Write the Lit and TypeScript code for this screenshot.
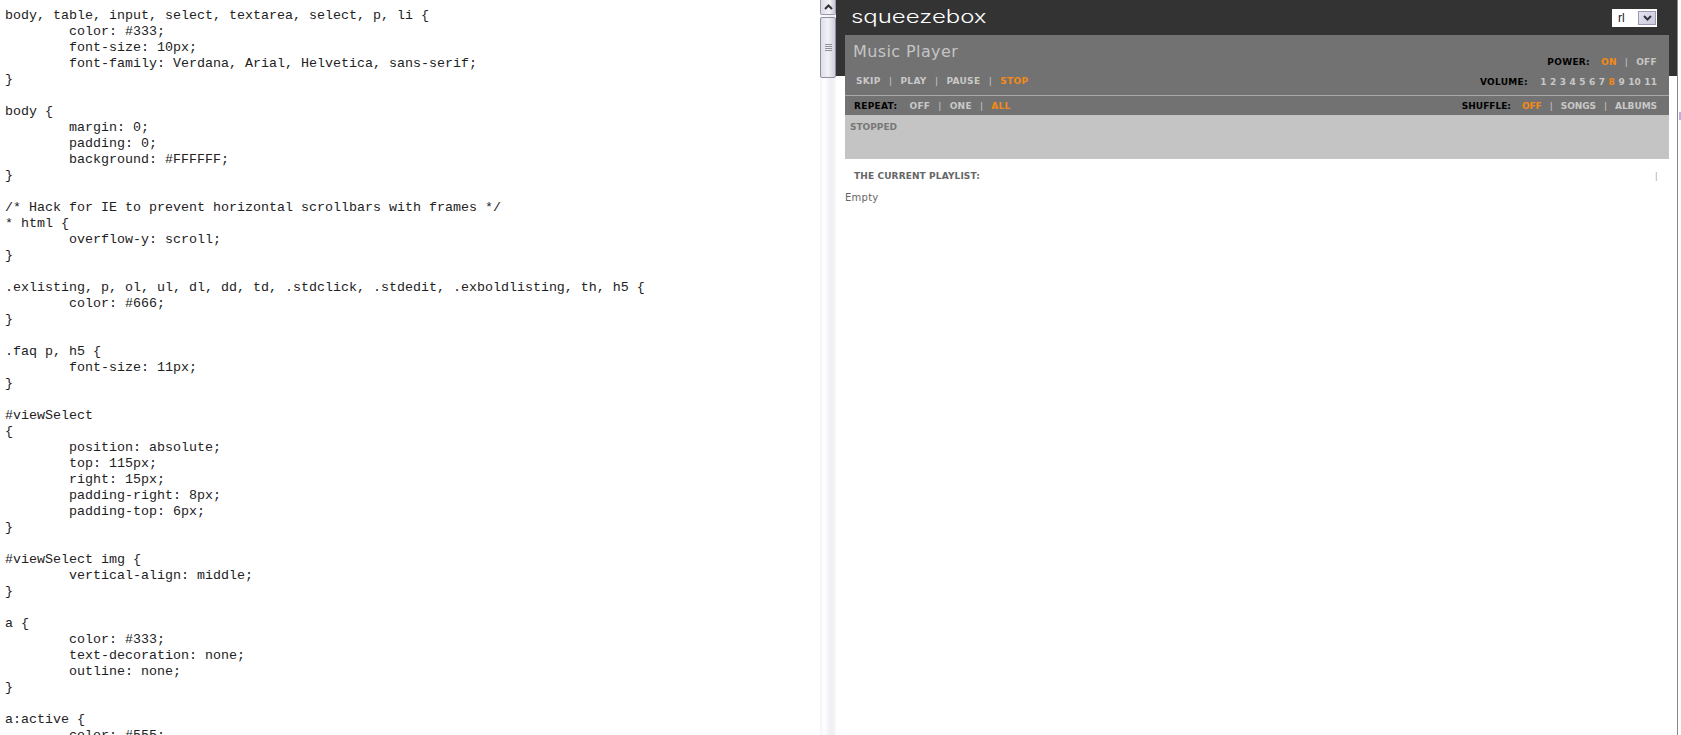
import { LitElement, html, css } from "lit";
import { customElement } from "lit/decorators.js";

const CODE = `body, table, input, select, textarea, select, p, li {
	color: #333;
	font-size: 10px;
	font-family: Verdana, Arial, Helvetica, sans-serif;
}

body {
	margin: 0;
	padding: 0;
	background: #FFFFFF;
}

/* Hack for IE to prevent horizontal scrollbars with frames */
* html {
	overflow-y: scroll;
}

.exlisting, p, ol, ul, dl, dd, td, .stdclick, .stdedit, .exboldlisting, th, h5 {
	color: #666;
}

.faq p, h5 {
	font-size: 11px;
}

#viewSelect
{
	position: absolute;
	top: 115px;
	right: 15px;
	padding-right: 8px;
	padding-top: 6px;
}

#viewSelect img {
	vertical-align: middle;
}

a {
	color: #333;
	text-decoration: none;
	outline: none;
}

a:active {
	color: #555;
}`;

@customElement("app-root")
export class AppRoot extends LitElement {
  static styles = css`
    :host { display: flex; width: 1681px; height: 735px; overflow: hidden; background: #fff; font-family: "DejaVu Sans", Verdana, sans-serif; }
    .code { width: 820px; flex: none; margin: 0; padding: 8px 0 0 5px; box-sizing: border-box; font: 13.33px/16px "Liberation Mono", monospace; color: #222; white-space: pre; tab-size: 8; overflow: hidden; }
    .scroll { width: 16px; flex: none; box-sizing: border-box; background: linear-gradient(90deg, #f3f3f7, #ffffff 25%, #eeeef3 70%, #f8f8fa); display: flex; flex-direction: column; gap: 2px; }
    .up { height: 15px; box-sizing: border-box; background: linear-gradient(90deg, #dcdce6, #f2f2f7 60%, #c9c9d6); border: 1px solid #9a9aa8; border-top: none; border-radius: 0 0 2px 2px; display: flex; align-items: center; justify-content: center; }
    .thumb { height: 61px; box-sizing: border-box; background: linear-gradient(90deg, #dedee8, #f1f1f6 50%, #cfcfdc); border: 1px solid #8f8f9e; border-radius: 2px; display: flex; align-items: center; justify-content: center; }
    .frame { flex: 1; display: flex; flex-direction: column; background: linear-gradient(#333 76px, #fff 76px); border-right: 1px solid #888; box-sizing: border-box; min-width: 0; }
    .edge { width: 3px; flex: none; box-sizing: border-box; padding-top: 112px; display: flex; justify-content: flex-end; }
    .edge b { display: block; width: 2px; height: 8px; background: #b4b4e0; }
    .top { height: 35px; flex: none; display: flex; justify-content: space-between; align-items: flex-start; padding: 0 20px 0 15px; }
    .logo { font: 300 18px/18px "Inter", sans-serif; color: #fff; margin-top: 8px; transform: scaleX(1.33); transform-origin: left; }
    .select { width: 45px; height: 18px; margin-top: 9px; background: #fff; display: flex; justify-content: space-between; align-items: center; padding: 0 1px 0 6px; box-sizing: border-box; font: 12px "Liberation Sans", sans-serif; color: #222; }
    .arrow { width: 18px; height: 14px; background: linear-gradient(135deg, #e4e4ee, #c8c8da); border: 1px solid #9a9ab0; box-sizing: border-box; display: flex; align-items: center; justify-content: center; }
    .panel { margin: 0 8px 0 9px; background: #727272; flex: none; }
    .main { height: 61px; box-sizing: border-box; border-bottom: 1px solid #a8a8a8; display: flex; justify-content: space-between; padding: 6px 12px 0 8px; }
    .title { font: 16px/16px "DejaVu Sans", sans-serif; color: #c4c4c4; letter-spacing: 0.4px; margin: 3px 0 0 0; }
    .left { display: flex; flex-direction: column; }
    .row { font-size: 9px; font-weight: 700; color: #c8c8c8; display: flex; align-items: center; line-height: 12px; white-space: nowrap; letter-spacing: 0.3px; }
    .row i { font-style: normal; font-weight: 400; color: #c8c8c8; padding: 0 8px; }
    .on { color: #f58a14; }
    .lab { color: #000; }
    .transport { margin: 15px 0 0 3px; }
    .transport span { margin-right: 0.5px; }
    .right { display: flex; flex-direction: column; align-items: flex-end; padding-top: 15px; gap: 8px; }
    .right .lab { margin-right: 11px; }
    .vol span { margin-left: 3.4px; letter-spacing: 0.1px; }
    .vol .lab { letter-spacing: 0.3px; margin-right: 9px; }
    .opts { height: 19px; box-sizing: border-box; display: flex; justify-content: space-between; align-items: center; padding: 0 12px 0 9px; }
    .opts .lab { margin-right: 12px; }
    .shuf { letter-spacing: -0.05px; }
    .shuf .lab { letter-spacing: 0; margin-right: 11px; }
    .status { height: 44px; background: #c4c4c4; margin: 0 8px 0 9px; box-sizing: border-box; padding: 6px 5px; font-size: 9px; line-height: 12px; font-weight: 700; color: #777; flex: none; }
    .plhead { display: flex; justify-content: space-between; align-items: center; height: 12px; margin: 11px 0 0 0; padding: 0 19px 0 18px; font-size: 9px; font-weight: 700; color: #666; letter-spacing: 0.12px; }
    .sep { font-weight: 400; color: #aaa; }
    .empty { font-size: 10px; line-height: 12px; color: #666; margin: 10px 0 0 9px; letter-spacing: 0.25px; }
  `;
  render() {
    return html`
      <pre class="code">${CODE}</pre>
      <div class="scroll">
        <div class="up"><svg width="9" height="6" viewBox="0 0 9 6"><path d="M1 5L4.5 1.5L8 5" fill="none" stroke="#333" stroke-width="2"/></svg></div>
        <div class="thumb"><svg width="7" height="8" viewBox="0 0 7 8"><path d="M0 .5H7M0 2.5H7M0 4.5H7M0 6.5H7" stroke="#8f8f9e"/></svg></div>
      </div>
      <div class="frame">
        <div class="top">
          <div class="logo">squeezebox</div>
          <div class="select"><span>rl</span><span class="arrow"><svg width="9" height="6" viewBox="0 0 9 6"><path d="M1 1L4.5 4.5L8 1" fill="none" stroke="#334" stroke-width="2"/></svg></span></div>
        </div>
        <div class="panel">
          <div class="main">
            <div class="left">
              <div class="title">Music Player</div>
              <div class="row transport"><span>SKIP</span><i>|</i><span>PLAY</span><i>|</i><span>PAUSE</span><i>|</i><span class="on">STOP</span></div>
            </div>
            <div class="right">
              <div class="row"><span class="lab">POWER:</span><span class="on">ON</span><i>|</i><span>OFF</span></div>
              <div class="row vol"><span class="lab">VOLUME:</span>
                ${[1,2,3,4,5,6,7,8,9,10,11].map(n => html`<span class=${n === 8 ? "on" : ""}>${n}</span>`)}
              </div>
            </div>
          </div>
          <div class="opts">
            <div class="row"><span class="lab">REPEAT:</span><span>OFF</span><i>|</i><span>ONE</span><i>|</i><span class="on">ALL</span></div>
            <div class="row shuf"><span class="lab">SHUFFLE:</span><span class="on">OFF</span><i>|</i><span>SONGS</span><i>|</i><span>ALBUMS</span></div>
          </div>
        </div>
        <div class="status">STOPPED</div>
        <div class="plhead"><span>THE CURRENT PLAYLIST:</span><span class="sep">|</span></div>
        <div class="empty">Empty</div>
      </div>
      <div class="edge"><b></b></div>
    `;
  }
}
